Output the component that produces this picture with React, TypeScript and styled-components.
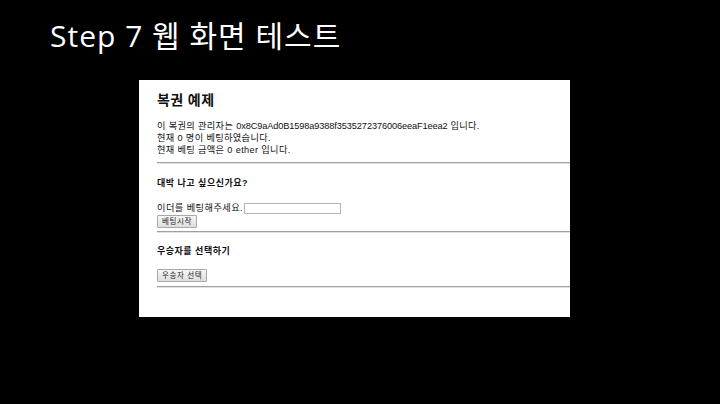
import { createGlobalStyle } from "styled-components";
import styled from "styled-components";

const GlobalStyle = createGlobalStyle`
  html, body {
    margin: 0;
    padding: 0;
    background: #000000;
  }
`;

const kr = `"Noto Sans CJK KR", "Noto Sans", sans-serif`;
const body = `"Liberation Sans", ${kr}`;

const Slide = styled.div`
  width: 720px;
  height: 404px;
  background: #000000;
  overflow: hidden;
  display: flex;
  flex-direction: column;
`;

const SlideTitle = styled.h1`
  margin: 16px 0 0 50px;
  color: #ffffff;
  font-family: "Open Sans", ${kr};
  font-size: 30px;
  font-weight: 400;
  line-height: 40px;
  letter-spacing: 1px;
`;

const Page = styled.div`
  width: 431px;
  height: 237px;
  margin: 24px 0 0 139px;
  background: #ffffff;
  box-sizing: border-box;
  padding: 10px 0 0 18px;
  display: flex;
  flex-direction: column;
  font-family: ${body};
  color: #111111;
`;

const PageTitle = styled.h2`
  margin: 0;
  font-size: 14px;
  font-weight: 700;
  line-height: 20px;
  letter-spacing: 0.4px;
`;

const InfoBlock = styled.div`
  margin-top: 10px;
  font-size: 9.2px;
  line-height: 12px;
  letter-spacing: 0.35px;
`;

const Address = styled.span`
  letter-spacing: -0.1px;
`;

const Rule = styled.hr<{ $gap: number }>`
  margin: ${(p) => p.$gap}px 0 0 0;
  border: 0;
  border-top: 1px solid #a0a0a0;
  border-bottom: 1px solid #e2e2e2;
  height: 0;
`;

const SectionTitle = styled.h3<{ $gap: number }>`
  margin: ${(p) => p.$gap}px 0 0 0;
  font-size: 9px;
  font-weight: 700;
  line-height: 12px;
  letter-spacing: 0.5px;
`;

const FieldRow = styled.div`
  margin-top: 13px;
  display: flex;
  align-items: center;
  font-size: 9.2px;
  line-height: 12px;
  letter-spacing: 0.45px;
`;

const TextInput = styled.input`
  width: 97px;
  height: 11px;
  box-sizing: border-box;
  margin: 0 0 0 1px;
  padding: 0;
  border: 1px solid #b5b5b5;
  background: #ffffff;
`;

const Button = styled.button<{ $gap: number }>`
  align-self: flex-start;
  margin-top: ${(p) => p.$gap}px;
  height: 13px;
  padding: 0 4px;
  box-sizing: border-box;
  border: 1px solid #a8a8a8;
  border-radius: 1px;
  background: linear-gradient(#f6f6f6, #dedede);
  font-family: ${body};
  font-size: 7.5px;
  line-height: 11px;
  letter-spacing: 0.6px;
  color: #222222;
`;

export default function App() {
  return (
    <>
      <GlobalStyle />
      <Slide>
        <SlideTitle>Step 7 웹 화면 테스트</SlideTitle>
        <Page>
          <PageTitle>복권 예제</PageTitle>
          <InfoBlock>
            이 복권의 관리자는 <Address>0x8C9aAd0B1598a9388f3535272376006eeaF1eea2</Address> 입니다.
            <br />
            현재 0 명이 베팅하였습니다.
            <br />
            현재 베팅 금액은 0 ether 입니다.
          </InfoBlock>
          <Rule $gap={6} />
          <SectionTitle $gap={13}>대박 나고 싶으신가요?</SectionTitle>
          <FieldRow>
            이더를 베팅해주세요.
            <TextInput type="text" />
          </FieldRow>
          <Button $gap={1}>베팅시작</Button>
          <Rule $gap={3} />
          <SectionTitle $gap={12}>우승자를 선택하기</SectionTitle>
          <Button $gap={12}>우승자 선택</Button>
          <Rule $gap={4} />
        </Page>
      </Slide>
    </>
  );
}
